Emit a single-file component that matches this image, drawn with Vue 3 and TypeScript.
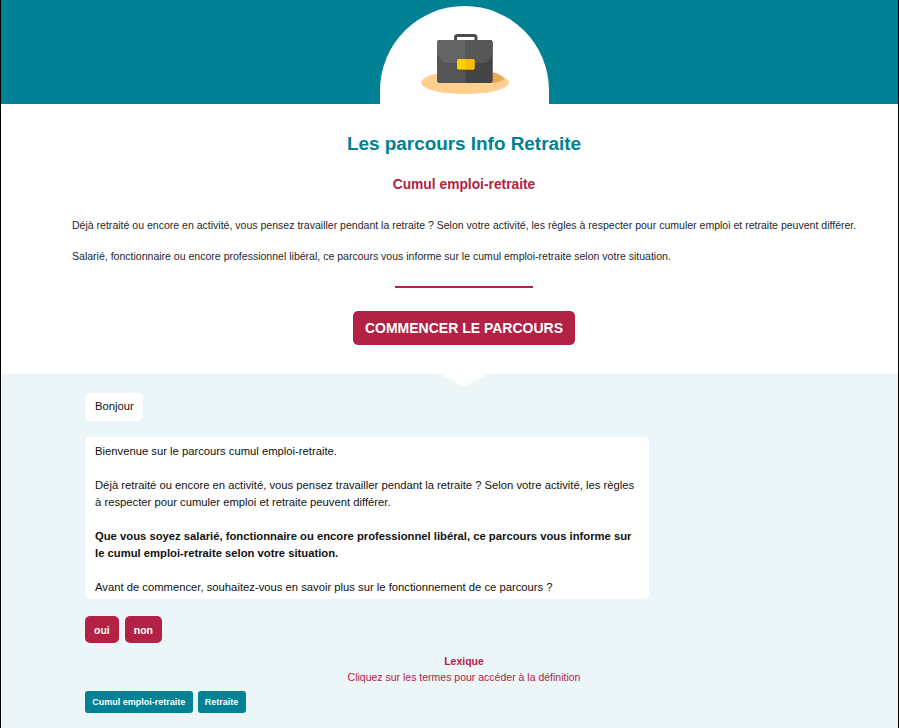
<script setup lang="ts">
const terms: string[] = ['Cumul emploi-retraite', 'Retraite']
</script>

<template>
  <div class="page">
    <header class="banner">
      <div class="dome">
        <svg class="case" viewBox="0 0 88 60" width="88" height="60" aria-hidden="true">
          <ellipse cx="44" cy="48.500" rx="44" ry="11.500" fill="#ffcf8f" />
          <path d="M71.500 38 Q80 40 83.500 45 Q78 49 71.500 49 Z" fill="#eba94f" />
          <path d="M34.500 7 V3.500 Q34.500 1.500 36.500 1.500 H53 Q55 1.500 55 3.500 V7" fill="none" stroke="#4a4a4a" stroke-width="3" />
          <rect x="16" y="6" width="55.500" height="43" rx="2.500" fill="#545454" />
          <path d="M44.500 6 H69 Q71.500 6 71.500 8.500 V46.500 Q71.500 49 69 49 H44.500 Z" fill="#444" />
          <path d="M16 8.500 Q16 6 18.500 6 H44.500 V29 H26 Q22 29 20.500 26 L16 20 Z" fill="#646464" />
          <path d="M44.500 6 H69 Q71.500 6 71.500 8.500 V20 L68 26 Q66.500 29 62 29 H44.500 Z" fill="#575757" />
          <rect x="36" y="25" width="17.500" height="10.500" rx="1.500" fill="#ffd000" />
          <path d="M44.500 25 H52 Q53.500 25 53.500 26.500 V34 Q53.500 35.500 52 35.500 H44.500 Z" fill="#f7bd00" />
        </svg>
      </div>
    </header>

    <section class="intro">
      <h1>Les parcours Info Retraite</h1>
      <h2>Cumul emploi-retraite</h2>
      <div class="lede">
        <p>Déjà retraité ou encore en activité, vous pensez travailler pendant la retraite ? Selon votre activité, les règles à respecter pour cumuler emploi et retraite peuvent différer.</p>
        <p>Salarié, fonctionnaire ou encore professionnel libéral, ce parcours vous informe sur le cumul emploi-retraite selon votre situation.</p>
      </div>
      <hr />
      <button class="start" type="button">COMMENCER LE PARCOURS</button>
    </section>

    <section class="chat">
      <span class="notch"></span>
      <div class="bubble short">Bonjour</div>
      <div class="bubble long">
        <p>Bienvenue sur le parcours cumul emploi-retraite.</p>
        <p>Déjà retraité ou encore en activité, vous pensez travailler pendant la retraite ? Selon votre activité, les règles à respecter pour cumuler emploi et retraite peuvent différer.</p>
        <p><strong>Que vous soyez salarié, fonctionnaire ou encore professionnel libéral, ce parcours vous informe sur le cumul emploi-retraite selon votre situation.</strong></p>
        <p>Avant de commencer, souhaitez-vous en savoir plus sur le fonctionnement de ce parcours ?</p>
      </div>
      <div class="answers">
        <button type="button">oui</button>
        <button type="button">non</button>
      </div>
      <div class="lexicon">
        <strong>Lexique</strong>
        <span>Cliquez sur les termes pour accéder à la définition</span>
      </div>
      <div class="terms">
        <button v-for="term in terms" :key="term" type="button">{{ term }}</button>
      </div>
    </section>
  </div>
</template>

<style>
html,
body {
  margin: 0;
  background: #fff;
}
</style>

<style scoped>
.page {
  height: 728px;
  overflow: hidden;
  display: flex;
  flex-direction: column;
  box-sizing: border-box;
  border-left: 1px solid #000;
  border-right: 1px solid #000;
  font-family: "Liberation Sans", Arial, sans-serif;
  color: #1f1f2b;
}

.banner {
  height: 104px;
  flex: none;
  background: #008194;
  display: flex;
  justify-content: center;
  align-items: flex-end;
  padding-left: 30px;
  box-sizing: border-box;
}

.dome {
  width: 169px;
  height: 98px;
  background: #fff;
  border-radius: 85px 85px 0 0;
  display: flex;
  justify-content: center;
  padding-top: 28px;
  box-sizing: border-box;
}

.case {
  display: block;
}

.intro {
  height: 270px;
  flex: none;
  box-sizing: border-box;
  padding: 28px 0 0 29px;
  display: flex;
  flex-direction: column;
  align-items: center;
}

h1 {
  margin: 0;
  font-size: 18.900px;
  line-height: 23px;
  font-weight: 700;
  color: #008194;
}

h2 {
  margin: 22px 0 0;
  font-size: 13.800px;
  line-height: 16px;
  font-weight: 700;
  color: #b32144;
}

.lede {
  width: 784px;
  margin-top: 25px;
  display: flex;
  flex-direction: column;
  gap: 17px;
  font-size: 10.540px;
  line-height: 14px;
}

.lede p {
  margin: 0;
  white-space: nowrap;
}

hr {
  width: 138px;
  height: 2px;
  margin: 23px 0 0;
  border: 0;
  background: #b32144;
}

.start {
  margin-top: 23px;
  width: 222px;
  height: 34px;
  border: 0;
  border-radius: 5px;
  background: #b32144;
  color: #fff;
  font: 700 14px "Liberation Sans", Arial, sans-serif;
  padding: 0;
}

.chat {
  flex: 1;
  position: relative;
  background: #ecf5f8;
  padding: 19px 0 0 84px;
  display: flex;
  flex-direction: column;
  align-items: flex-start;
}

.notch {
  position: absolute;
  left: 439px;
  top: 0;
  border-style: solid;
  border-width: 13px 24px 0;
  border-color: #fff transparent transparent;
}

.bubble {
  background: #fff;
  border-radius: 5px;
  font-size: 11.250px;
  line-height: 17px;
  box-sizing: border-box;
  color: #111;
}

.short {
  padding: 5px 9.500px 6px 10px;
}

.long {
  margin-top: 16px;
  width: 564px;
  padding: 6px 12px 0 10px;
  height: 162px;
}

.long p {
  margin: 0 0 17px;
}

.answers {
  margin-top: 17px;
  display: flex;
  gap: 6px;
}

.answers button {
  height: 27px;
  padding: 0 9px;
  border: 0;
  border-radius: 5px;
  background: #b32144;
  color: #fff;
  font: 700 10.500px "Liberation Sans", Arial, sans-serif;
}

.lexicon {
  width: 758px;
  margin-top: 12px;
  display: flex;
  flex-direction: column;
  align-items: center;
  gap: 4px;
  color: #b32144;
  font-size: 10.500px;
  line-height: 12px;
}

.terms {
  margin-top: 8px;
  display: flex;
  gap: 5px;
}

.terms button {
  height: 22px;
  padding: 0 7.250px;
  border: 0;
  border-radius: 3px;
  background: #008194;
  color: #fff;
  font: 700 9px "Liberation Sans", Arial, sans-serif;
}
</style>
